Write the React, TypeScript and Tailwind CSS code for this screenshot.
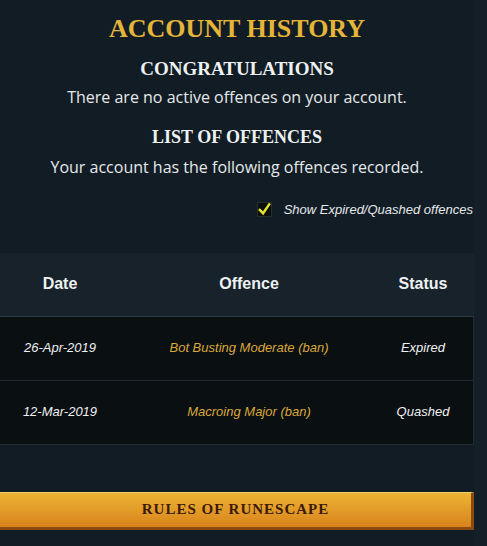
import React from "react";

const offences = [
  { date: "26-Apr-2019", offence: "Bot Busting Moderate (ban)", status: "Expired" },
  { date: "12-Mar-2019", offence: "Macroing Major (ban)", status: "Quashed" },
];

function CheckIcon() {
  return (
    <svg viewBox="0 0 16 16" className="w-[15px] h-[15px]">
      <rect x="0.5" y="0.5" width="15" height="15" fill="#0b0f0d" stroke="#2a2f2a" />
      <path d="M3 8.5 L6.5 12 L13 2.5" fill="none" stroke="#e4e52a" strokeWidth="2.6" strokeLinecap="square" />
    </svg>
  );
}

export default function App() {
  return (
    <div className="w-[487px] h-[546px] bg-[#121c24] flex overflow-hidden">
      <div className="w-[474px] flex flex-col">
        <h1 className="mt-[14px] text-center text-[26px] leading-[30px] font-bold text-[#e5b53a] font-['Liberation_Serif',serif]">
          ACCOUNT HISTORY
        </h1>
        <h2 className="mt-[14px] text-center text-[19px] leading-[22px] font-bold text-[#eef1f2] font-['Liberation_Serif',serif]">
          CONGRATULATIONS
        </h2>
        <p className="mt-[6px] text-center text-[16px] leading-[22px] text-[#e6e9ea] font-['Open_Sans',sans-serif]">
          There are no active offences on your account.
        </p>
        <h2 className="mt-[18px] text-center text-[18px] leading-[22px] font-bold text-[#eef1f2] font-['Liberation_Serif',serif]">
          LIST OF OFFENCES
        </h2>
        <p className="mt-[8px] text-center text-[16px] leading-[22px] text-[#e6e9ea] font-['Open_Sans',sans-serif]">
          Your account has the following offences recorded.
        </p>
        <div className="mt-[22px] flex items-center justify-end gap-[12px] pr-[1px]">
          <CheckIcon />
          <span className="text-[13px] italic text-[#e6e9ea] font-['Liberation_Sans',sans-serif]">
            Show Expired/Quashed offences
          </span>
        </div>
        <div className="mt-[33px] font-['Liberation_Sans',sans-serif]">
          <div className="grid grid-cols-[120px_258px_96px] h-[64px] items-center bg-[#17222a] border-b border-[#2a3840] text-[16px] font-bold text-[#eef1f2] text-center">
            <span>Date</span>
            <span>Offence</span>
            <span className="pr-[6px]">Status</span>
          </div>
          {offences.map((o) => (
            <div
              key={o.date}
              className="grid grid-cols-[120px_258px_96px] h-[64px] items-center bg-[#0a0f12] border-b border-r border-[#1f2a31] text-[13px] italic text-center"
            >
              <span className="text-[#eef1f2]">{o.date}</span>
              <span className="text-[#d9a83a]">{o.offence}</span>
              <span className="pr-[6px] text-[#eef1f2]">{o.status}</span>
            </div>
          ))}
        </div>
        <button className="mt-[47px] h-[38px] w-[474px] bg-gradient-to-b from-[#ebb433] to-[#d8831b] border-t border-[#f3cf68] border-r-[3px] border-b-[3px] border-r-[#8a4a10] border-b-[#8a4a10] text-[15px] font-bold text-[#3d1a06] font-['Liberation_Serif',serif] tracking-[1px]">
          RULES OF RUNESCAPE
        </button>
      </div>
      <div className="flex-1 bg-[#141f27]" />
    </div>
  );
}
